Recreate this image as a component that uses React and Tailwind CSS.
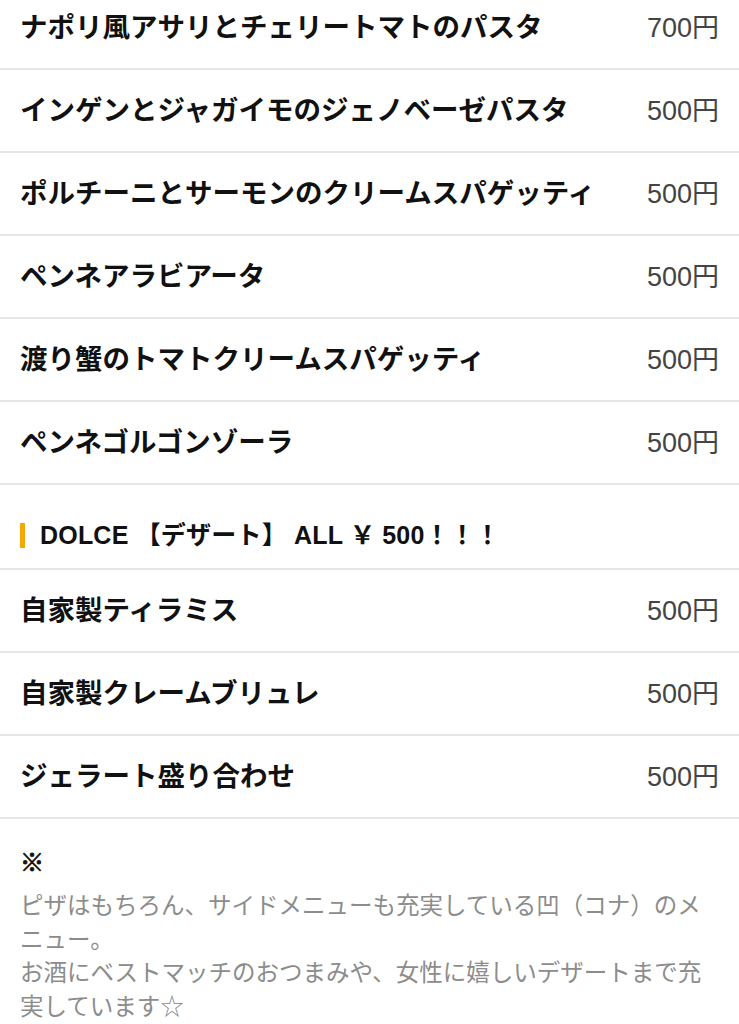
import React from 'react';

const pastas = [
  { name: 'ナポリ風アサリとチェリートマトのパスタ', price: '700円' },
  { name: 'インゲンとジャガイモのジェノベーゼパスタ', price: '500円' },
  { name: 'ポルチーニとサーモンのクリームスパゲッティ', price: '500円' },
  { name: 'ペンネアラビアータ', price: '500円' },
  { name: '渡り蟹のトマトクリームスパゲッティ', price: '500円' },
  { name: 'ペンネゴルゴンゾーラ', price: '500円' },
];

const dolce = [
  { name: '自家製ティラミス', price: '500円' },
  { name: '自家製クレームブリュレ', price: '500円' },
  { name: 'ジェラート盛り合わせ', price: '500円' },
];

const jp = { fontFamily: '"Liberation Sans", "Noto Sans CJK JP", sans-serif' };
const mark = { fontFamily: '"Noto Sans CJK JP", sans-serif' };

function MenuRow({ item }) {
  return (
    <div className="flex h-[83px] items-center justify-between border-b-2 border-[#e6e6e6] px-5 pt-[1px]">
      <span className="text-[27.5px] font-bold text-[#111]">{item.name}</span>
      <span className="text-[27px] text-[#444]">{item.price}</span>
    </div>
  );
}

export default function App() {
  return (
    <div className="w-[739px] h-[1024px] overflow-hidden bg-white" style={jp}>
      <div className="-mt-[13px]">
        {pastas.map((item) => (
          <MenuRow key={item.name} item={item} />
        ))}

        {/* section heading */}
        <div className="flex h-[85px] items-end border-b-2 border-[#e6e6e6] px-5 pb-[16px]">
          <div className="flex items-center gap-[15px]">
            <span className="block h-[25px] w-[5px] bg-[#f5a800]" />
            <span className="text-[25px] font-bold leading-[34px] tracking-[0.2px] text-[#111]">
              DOLCE 【デザート】 ALL ￥ 500！！！
            </span>
          </div>
        </div>

        {dolce.map((item) => (
          <MenuRow key={item.name} item={item} />
        ))}

        <div className="border-b-2 border-[#e6e6e6] px-5 pt-[26px] pb-[4px]">
          <div
            className="text-[24px] font-bold leading-[32px] text-[#111] [-webkit-text-stroke:0.8px_#111]"
            style={mark}
          >
            ※
          </div>
          <p className="mt-[13px] text-[23.5px] leading-[33.5px] text-[#8c8c8c]">
            ピザはもちろん、サイドメニューも充実している凹（コナ）のメニュー。
            <br />
            お酒にベストマッチのおつまみや、女性に嬉しいデザートまで充実しています☆
          </p>
        </div>
      </div>
    </div>
  );
}
